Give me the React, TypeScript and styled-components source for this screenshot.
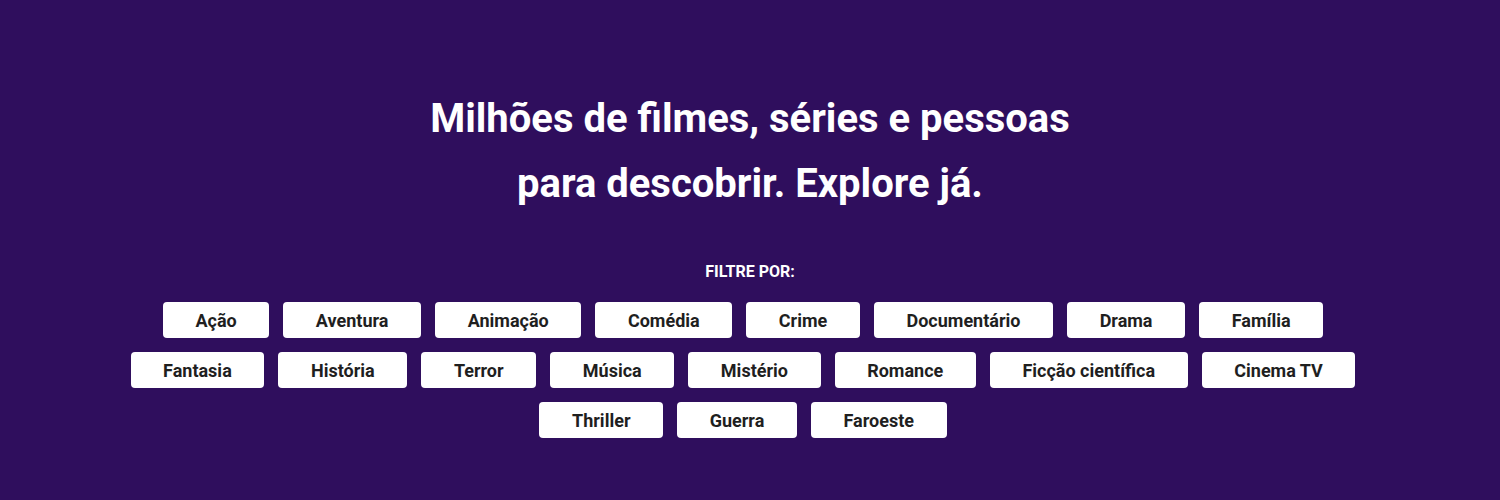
import React from "react";
import styled, { createGlobalStyle } from "styled-components";

const Global = createGlobalStyle`
  html, body { margin: 0; padding: 0; background: #2f0e5d; }
  body { font-family: Roboto, "Liberation Sans", Arial, sans-serif; }
`;

const Hero = styled.section`
  width: 100%;
  min-height: 500px;
  background: #2f0e5d;
  padding-top: 86px;
  box-sizing: border-box;
  display: flex;
  flex-direction: column;
  align-items: center;
`;

const Title = styled.h1`
  margin: 0;
  color: #ffffff;
  font-size: 40px;
  font-weight: 700;
  line-height: 65px;
  text-align: center;
`;

const Label = styled.h2`
  margin: 48px 0 22px;
  color: #ffffff;
  font-size: 16px;
  font-weight: 700;
  line-height: 16px;
  text-transform: uppercase;
`;

const Genres = styled.div`
  display: flex;
  flex-wrap: wrap;
  justify-content: center;
  width: 1270px;
`;

const Genre = styled.button`
  height: 36px;
  margin: 0 14px 14px 0;
  padding: 0 32.6px;
  border: none;
  border-radius: 4px;
  background: #ffffff;
  color: #1f1f1f;
  font-family: Roboto, "Liberation Sans", Arial, sans-serif;
  font-size: 18px;
  font-weight: 700;
  cursor: pointer;
`;

const genres = [
  "Ação", "Aventura", "Animação", "Comédia", "Crime", "Documentário", "Drama", "Família",
  "Fantasia", "História", "Terror", "Música", "Mistério", "Romance", "Ficção científica", "Cinema TV",
  "Thriller", "Guerra", "Faroeste",
];

export default function App() {
  return (
    <>
      <Global />
      <Hero>
        <Title>
          Milhões de filmes, séries e pessoas
          <br />
          para descobrir. Explore já.
        </Title>
        <Label>Filtre por:</Label>
        <Genres>
          {genres.map((g) => (
            <Genre key={g}>{g}</Genre>
          ))}
        </Genres>
      </Hero>
    </>
  );
}
